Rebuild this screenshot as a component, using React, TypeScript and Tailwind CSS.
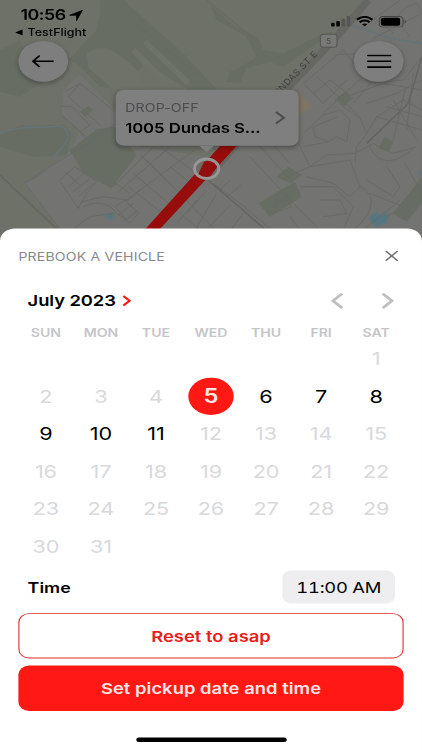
import React from "react";

type DayState = "muted" | "open" | "selected";

const WEEKDAYS = ["SUN", "MON", "TUE", "WED", "THU", "FRI", "SAT"];
const FIRST_WEEKDAY = 6;
const DAYS = Array.from({ length: 31 }, (_, i) => i + 1);

function stateOf(day: number): DayState {
  if (day === 5) return "selected";
  return day > 5 && day < 12 ? "open" : "muted";
}

const DAY_CLASS: Record<DayState, string> = {
  muted: "text-[20px] text-[#d9d9dc]",
  open: "text-[20px] text-black",
  selected: "rounded-full bg-[#ff1814] text-[22px] font-semibold text-[#ffe9e8]",
};

function CityMap() {
  return (
    <svg className="absolute left-0 top-0 h-[264.5px] w-[390px]" viewBox="0 0 1266 705" preserveAspectRatio="none" fill="none">
      <defs>
        <filter id="soft" x="-20%" y="-20%" width="140%" height="140%">
          <feGaussianBlur stdDeviation="5" />
        </filter>
      </defs>
      <rect width="1266" height="705" fill="#737371" />
      <path d="M0 0H1100L1010 110L835 270L700 440L620 470L420 440L345 330L240 222L190 270L185 345L240 390L215 450L100 540L70 550L195 705H0Z" fill="#6d7168" />
      <g fill="#676d63">
        <path d="M300 0L370 0L470 90L540 150L650 268L560 268L480 215L400 150L430 200L350 268L300 260L230 190L205 180L290 90L300 40Z" />
        <path d="M630 15L700 75L770 110L790 150L850 160L960 105L1000 95L900 165L850 200L810 185L740 205L720 250L680 245L690 215L740 190L770 170L740 110L650 60Z" />
        <path d="M0 150L60 120L80 170L60 220L130 245L60 290L0 275Z" />
        <path d="M0 400L70 375L190 375L215 400L200 465L100 470L0 440Z" />
        <path d="M210 450L290 388L345 380L410 465L335 565L250 520Z" />
        <path d="M775 610L885 545L905 590L810 650Z" />
        <path d="M830 530L865 500L905 525L870 550Z" />
        <path d="M1005 298L1035 275L1060 295L1030 320Z" />
        <path d="M1135 445L1155 410L1180 425L1165 455Z" />
        <path d="M1180 640L1266 530V610L1220 665Z" />
        <path d="M240 335L265 318L278 330L255 350Z" />
      </g>
      <path d="M405 155L495 245M440 130L560 245" stroke="#6e7269" strokeWidth="18" strokeLinecap="round" />
      <path d="M260 160C310 120 360 160 410 210L440 268H340L265 205Z" fill="#6e7269" />
      <path d="M895 275L940 320L895 345Z" fill="#7e7563" filter="url(#soft)" />
      <path d="M0 400C60 375 110 385 185 378C225 410 195 430 165 468M1010 78C1100 70 1120 110 1190 118L1266 130" stroke="#647477" strokeWidth="5" />
      <g fill="#527680" filter="url(#soft)">
        <path d="M315 645L335 640L345 650L330 660Z" />
        <path d="M1105 655L1128 637L1140 645L1165 642L1160 668L1125 680Z" />
        <path d="M1255 510H1266V535Z" />
      </g>
      <g stroke="#686866" strokeWidth="2.5" strokeLinejoin="round">
        <path d="M195 275L240 250L345 335M185 318L215 320L270 375L240 395L270 420L345 372M240 250L205 290L300 375M185 345L240 395L265 430L210 460M340 560L460 440M355 575L510 440M380 600L590 445M400 520L600 690M440 480L660 705M480 440L590 520M510 500L560 540M420 465L500 540M340 545L390 580M385 560L500 650" />
        <path d="M75 550L195 705M75 550L150 500L215 460M180 540L225 500L290 545L260 580L235 625L180 545M195 515L240 555M205 560L250 520M220 575L270 535M235 590L280 550M245 605L310 590L385 600L420 570M250 620C290 600 330 610 350 640L380 660M345 620L375 600L415 640L390 670L345 620M355 645L400 610M370 665L415 630M200 700L270 650L340 640" />
        <path d="M640 550L720 610L815 690M660 570L690 540M680 590L725 555M750 470L870 600L960 690M780 440L880 550M820 435L870 490M620 570L560 640M590 600L530 670M650 580L580 700M690 615L610 700M730 640L680 705" />
        <path d="M910 400L970 345L1020 330L1050 360L1040 425L1010 410L985 425L945 410L940 380L1015 350M1030 320L1080 355L1100 400L1070 440L1065 490M895 430L930 500L980 465L1065 460L1120 430L1180 460L1250 440M870 525L930 500L1050 480L1080 560L1050 590L1000 550L920 530" />
        <path d="M900 560L1000 560L1060 620L1030 690M960 600L1020 600L1040 640L970 650M870 650L900 690M1080 560C1140 590 1110 650 1060 690M1110 440C1130 490 1180 500 1240 445M1100 400L1130 350L1210 300L1266 330M1060 310L1110 250M985 425L910 440M830 605L860 600L875 620L820 640Z" />
        <path d="M910 250L1030 150L1110 250L1210 240L1266 170M950 230L1080 350M910 250L970 310L1040 240M940 280L990 240L1050 285M1000 165L1080 160L1110 190M970 340L1110 210M1040 290L1150 250L1266 270M1100 310L1190 280L1266 240M1130 350L1266 390M1160 320L1266 350M1180 300L1250 420M1215 270L1180 420M1240 220L1220 390" />
        <path d="M1090 80L1200 0M1120 115L1266 40M1160 80L1220 20L1250 10L1266 35M1120 50L1180 100M1190 60L1230 110M1160 500L1200 560L1180 590L1100 540M1215 490L1260 570M1110 580L1210 620L1160 650M1090 690L1200 600" />
      </g>
      <path d="M1105 0L1010 110L820 310L650 500" stroke="#666663" strokeWidth="22" />
      <path d="M0 525L190 705M625 540L815 705M1266 170L1225 310L1100 430" stroke="#656563" strokeWidth="5" />
      <path d="M0 690L20 705M620 0L760 115M410 75L650 268M130 220L60 280" stroke="#676c63" strokeWidth="3" />
      <text x="832" y="290" transform="rotate(-46 832 290)" fill="#414140" fontFamily="Inter, sans-serif" fontSize="27" letterSpacing="1.5">UNDAS ST E</text>
      <rect x="961" y="103" width="50" height="39" rx="9" fill="#797978" stroke="#555" strokeWidth="3" />
      <text x="986" y="131" textAnchor="middle" fill="#4c4c4c" fontFamily="Inter, sans-serif" fontSize="23" fontWeight="500">5</text>
      <path d="M420 705L585 522L625 477L660 438H710L630 525L482 685L463 705Z" fill="#960d0b" />
      <ellipse cx="620" cy="506" rx="36" ry="28" fill="#6f6b69" />
      <path d="M594 524L612 485L635 478L652 500L630 530L608 533Z" fill="#920f0d" />
      <ellipse cx="620" cy="506" rx="36.5" ry="29" stroke="#979797" strokeWidth="8.5" />
    </svg>
  );
}

function StatusBar() {
  return (
    <div className="flex h-[46px] justify-between">
      <div className="flex flex-col pl-[13.5px] pt-[7px]">
        <div className="flex h-[20px] items-center gap-[3.5px] pl-[5.5px]">
          <span className="text-[16.5px] font-semibold leading-[20px] tracking-[-0.5px]">10:56</span>
          <svg className="h-[13px] w-[12.5px]" viewBox="0 0 13 13">
            <path d="M12.6.4L7 12.6V6.2H.4Z" fill="#000" stroke="#000" strokeWidth=".8" strokeLinejoin="round" />
          </svg>
        </div>
        <div className="flex h-[18px] items-center gap-[5px]">
          <svg className="h-[7px] w-[7px]" viewBox="0 0 7 7">
            <path d="M7 0V7L0 3.5Z" />
          </svg>
          <span className="text-[11.5px] font-medium leading-[18px] tracking-[0.03px]">TestFlight</span>
        </div>
      </div>
      <div className="mt-[17px] flex h-[14px] items-center gap-[5px] pr-[14.5px]">
        <svg className="h-[12px] w-[18px]" viewBox="0 0 18 12">
          <rect x="0" y="7.5" width="3.3" height="4.5" rx="1" />
          <rect x="4.8" y="5.5" width="3.3" height="6.5" rx="1" />
          <rect x="9.6" y="3" width="3.3" height="9" rx="1" fill="#555553" />
          <rect x="14.4" y="0" width="3.3" height="12" rx="1" fill="#555553" />
        </svg>
        <svg className="h-[12px] w-[16px]" viewBox="0 0 16 12" fill="none" stroke="#000" strokeWidth="2.1">
          <path d="M.8 4.2C5-.1 11-.1 15.2 4.2M3.4 7C6 4.5 10 4.5 12.6 7" />
          <path d="M8 11.8L5.6 9.3C7 8.1 9 8.1 10.4 9.3Z" fill="#000" stroke="none" />
        </svg>
        <svg className="h-[13px] w-[25.5px]" viewBox="0 0 25.5 13">
          <rect x=".5" y=".5" width="22" height="12" rx="3.6" fill="none" stroke="#454543" />
          <rect x="2" y="2" width="17.8" height="9" rx="2" />
          <path d="M24 4.5V8.5Q25.3 8 25.3 6.5T24 4.5" fill="#454543" />
        </svg>
      </div>
    </div>
  );
}

export default function App() {
  return (
    <div className="h-[750px] w-[422px] overflow-hidden bg-[#6d7168]">
      <main className="relative flex h-[844px] w-[390px] origin-top-left scale-x-[1.08205] scale-y-[0.88863] flex-col font-['Inter',sans-serif] text-black">
        <CityMap />
        <header className="relative h-[256.6px] shrink-0">
          <StatusBar />
          <div className="flex justify-between px-[16.6px]">
            <button className="flex size-[46px] items-center justify-center rounded-full bg-[#7e7e7e] shadow-[0_2px_5px_rgba(0,0,0,0.3)]">
              <svg className="h-[14px] w-[21px]" viewBox="0 0 21 14" fill="none" stroke="#000" strokeWidth="1.8" strokeLinecap="round" strokeLinejoin="round">
                <path d="M20 7H1.5M7.2 1L1.5 7L7.2 13" />
              </svg>
            </button>
            <button className="flex size-[46px] items-center justify-center rounded-full bg-[#7e7e7e] shadow-[0_2px_5px_rgba(0,0,0,0.3)]">
              <svg className="h-[16px] w-[23px]" viewBox="0 0 23 16" fill="none" stroke="#000" strokeWidth="1.8" strokeLinecap="round">
                <path d="M1 1.5H22M1 8H22M1 14.5H22" />
              </svg>
            </button>
          </div>
          <div className="relative ml-[107px] mt-[9.3px] flex h-[63px] w-[168.5px] items-center justify-between rounded-[8px] bg-[#7f7f7f] pl-[8.7px] pr-[12px] shadow-[0_2px_5px_rgba(0,0,0,0.3)]">
            <div className="flex flex-col pt-[1px]">
              <span className="text-[13px] leading-[22px] tracking-[0.15px] text-[#4b4b4d]">DROP-OFF</span>
              <span className="whitespace-nowrap pt-[1px] text-[15.5px] font-semibold leading-[24px] tracking-[-0.1px]">1005 Dundas S...</span>
            </div>
            <svg className="h-[15px] w-[10px]" viewBox="0 0 10 15" fill="none" stroke="#4c4c4c" strokeWidth="2">
              <path d="M1 1L8.5 7.5L1 14" />
            </svg>
            <svg className="absolute left-[77px] top-[62.5px] h-[7px] w-[14px]" viewBox="0 0 14 7">
              <path d="M0 0H14L7 7Z" fill="#7f7f7f" />
            </svg>
          </div>
        </header>

        <section className="relative flex grow flex-col rounded-t-[14px] bg-white px-[17px]">
          <div className="flex h-[63px] items-center justify-between pr-[5.5px]">
            <h1 className="pt-[2.5px] text-[13px] tracking-[0.17px] text-[#88888b]">PREBOOK A VEHICLE</h1>
            <svg className="h-[12px] w-[12px]" viewBox="0 0 12 12" fill="none" stroke="#707072" strokeWidth="1.5" strokeLinecap="round">
              <path d="M.8.8L11.2 11.2M11.2.8L.8 11.2" />
            </svg>
          </div>

          <div className="flex h-[37px] items-center justify-between pl-[8.5px] pr-[9.5px]">
            <div className="flex items-center gap-[6px]">
              <h2 className="pt-[1.5px] text-[17px] font-semibold tracking-[-0.1px]">July 2023</h2>
              <svg className="h-[13px] w-[8px]" viewBox="0 0 8 13" fill="none" stroke="#ff1814" strokeWidth="2.2">
                <path d="M1 1.2L6.8 6.5L1 11.8" />
              </svg>
            </div>
            <div className="flex gap-[36px]">
              <svg className="h-[19px] w-[11px]" viewBox="0 0 11 19" fill="none" stroke="#bebec1" strokeWidth="2.8">
                <path d="M10.3 1.4L1.8 9.5L10.3 17.6" />
              </svg>
              <svg className="h-[19px] w-[11px]" viewBox="0 0 11 19" fill="none" stroke="#bebec1" strokeWidth="2.8">
                <path d="M.7 1.4L9.2 9.5L.7 17.6" />
              </svg>
            </div>
          </div>

          <div className="grid h-[26px] grid-cols-7 items-end text-center text-[13px] font-semibold leading-[18px] text-[#c5c5c8]">
            {WEEKDAYS.map((name) => (
              <span key={name}>{name}</span>
            ))}
          </div>

          <div className="grid auto-rows-[42.2px] grid-cols-7 justify-items-center">
            {Array.from({ length: FIRST_WEEKDAY }, (_, i) => (
              <span key={`blank-${i}`} />
            ))}
            {DAYS.map((day) => (
              <span key={day} className={`flex h-[42.2px] w-[42.4px] items-center justify-center pt-[0.6px] tracking-[-0.1px] ${DAY_CLASS[stateOf(day)]}`}>
                {day}
              </span>
            ))}
          </div>

          <div className="mt-[6.5px] flex h-[37.5px] items-center justify-between pl-[8.5px] pr-[8px]">
            <span className="pt-[1px] text-[16.5px] font-semibold">Time</span>
            <span className="flex h-[37px] w-[104px] items-center justify-center rounded-[8px] bg-[#eeeef0] pt-[1px] text-[17px] tabular-nums tracking-[-0.25px]">11:00 AM</span>
          </div>

          <button className="mt-[10px] h-[51px] shrink-0 rounded-[10px] border border-[#e02a27] pt-[2.5px] text-[17px] font-semibold text-[#e81c19]">Reset to asap</button>
          <button className="mt-[8px] h-[51px] shrink-0 rounded-[10px] bg-[#ff1814] pt-[2.5px] text-[17px] font-semibold tracking-[0.03px] text-[#ffe5e4]">Set pickup date and time</button>
          <div className="mx-auto mt-[30px] h-[5.5px] w-[139px] rounded-full bg-black" />
        </section>
      </main>
    </div>
  );
}
